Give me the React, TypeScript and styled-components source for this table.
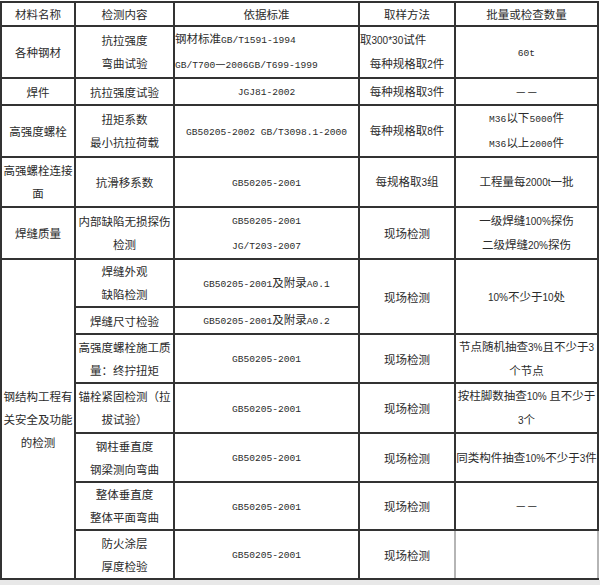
import * as React from 'react'
import styled, { createGlobalStyle } from 'styled-components'

const GlobalStyle = createGlobalStyle`
    html, body {
        margin: 0;
        padding: 0;
        background: #e8e8e8;
    }
`

const Sheet = styled.div`
    background: #fff;
    padding-top: 1px;
    width: 600px;
`

const Table = styled.table`
    border-collapse: collapse;
    table-layout: fixed;
    width: 599px;
    border: 2px solid #333;
    color: #2b2b2b;
    font-family: 'Noto Sans CJK SC', sans-serif;
    font-size: 11.5px;
`

const Latin = styled.span``

const Row = styled.tr<{ $h: number }>`
    height: ${(p) => p.$h}px;
`

const Cell = styled.td<{ $sans?: boolean; $faint?: boolean }>`
    border: 2px solid #333;
    ${(p) => (p.$faint ? 'border-left-color: #9a9a9a; border-right-color: #b5b5b5;' : '')}
    padding: 0;
    text-align: center;
    vertical-align: middle;
    line-height: 22px;
    overflow: visible;

    ${Latin} {
        font-family: ${(p) => (p.$sans ? "'Liberation Sans', sans-serif" : "'Liberation Mono', monospace")};
        font-size: ${(p) => (p.$sans ? '10px' : '9.6px')};
    }
`

const Line = styled.div<{ $align?: 'left' | 'center' }>`
    line-height: 23px;
    white-space: nowrap;
    text-align: ${(p) => p.$align ?? 'center'};
`

const text = (s: string) =>
    s.split(/([\x21-\x7e]+)/).map((part, i) =>
        /^[\x21-\x7e]/.test(part) ? <Latin key={i}>{part}</Latin> : part,
    )

const Lines = ({ items, align }: { items: string[]; align?: 'left' | 'center' }) => (
    <>
        {items.map((s, i) => (
            <Line key={i} $align={align}>
                {text(s)}
            </Line>
        ))}
    </>
)

export default function App() {
    return (
        <>
            <GlobalStyle />
            <Sheet>
                <Table>
                    <colgroup>
                        <col style={{ width: 74 }} />
                        <col style={{ width: 99 }} />
                        <col style={{ width: 185 }} />
                        <col style={{ width: 96 }} />
                        <col style={{ width: 143 }} />
                    </colgroup>
                    <tbody>
                        <Row $h={24}>
                            <Cell>材料名称</Cell>
                            <Cell>检测内容</Cell>
                            <Cell>依据标准</Cell>
                            <Cell>取样方法</Cell>
                            <Cell>批量或检查数量</Cell>
                        </Row>
                        <Row $h={50}>
                            <Cell>各种钢材</Cell>
                            <Cell>
                                <Lines items={['抗拉强度', '弯曲试验']} />
                            </Cell>
                            <Cell>
                                <Lines align="left" items={['钢材标准GB/T1591-1994', 'GB/T700—2006GB/T699-1999']} />
                            </Cell>
                            <Cell $sans>
                                <Line $align="left">{text('取300*30试件')}</Line>
                                <Line>{text('每种规格取2件')}</Line>
                            </Cell>
                            <Cell>{text('60t')}</Cell>
                        </Row>
                        <Row $h={23}>
                            <Cell>焊件</Cell>
                            <Cell>抗拉强度试验</Cell>
                            <Cell>{text('JGJ81-2002')}</Cell>
                            <Cell $sans>{text('每种规格取3件')}</Cell>
                            <Cell>－－</Cell>
                        </Row>
                        <Row $h={49}>
                            <Cell>高强度螺栓</Cell>
                            <Cell>
                                <Lines items={['扭矩系数', '最小抗拉荷载']} />
                            </Cell>
                            <Cell>
                                <Line>
                                    <Latin>GB50205-2002 GB/T3098.1-2000</Latin>
                                </Line>
                            </Cell>
                            <Cell $sans>{text('每种规格取8件')}</Cell>
                            <Cell>
                                <Lines items={['M36以下5000件', 'M36以上2000件']} />
                            </Cell>
                        </Row>
                        <Row $h={50}>
                            <Cell>
                                <Lines items={['高强螺栓连接', '面']} />
                            </Cell>
                            <Cell>抗滑移系数</Cell>
                            <Cell>{text('GB50205-2001')}</Cell>
                            <Cell $sans>{text('每规格取3组')}</Cell>
                            <Cell $sans>{text('工程量每2000t一批')}</Cell>
                        </Row>
                        <Row $h={48}>
                            <Cell>焊缝质量</Cell>
                            <Cell>
                                <Lines items={['内部缺陷无损探伤', '检测']} />
                            </Cell>
                            <Cell>
                                <Lines items={['GB50205-2001', 'JG/T203-2007']} />
                            </Cell>
                            <Cell>现场检测</Cell>
                            <Cell $sans>
                                <Lines items={['一级焊缝100%探伤', '二级焊缝20%探伤']} />
                            </Cell>
                        </Row>
                        <Row $h={48}>
                            <Cell rowSpan={8}>
                                <Lines items={['钢结构工程有', '关安全及功能', '的检测']} />
                            </Cell>
                            <Cell>
                                <Lines items={['焊缝外观', '缺陷检测']} />
                            </Cell>
                            <Cell>{text('GB50205-2001及附录A0.1')}</Cell>
                            <Cell rowSpan={2}>现场检测</Cell>
                            <Cell rowSpan={2} $sans>
                                {text('10%不少于10处')}
                            </Cell>
                        </Row>
                        <Row $h={25}>
                            <Cell>焊缝尺寸检验</Cell>
                            <Cell>{text('GB50205-2001及附录A0.2')}</Cell>
                        </Row>
                        <Row $h={48}>
                            <Cell>
                                <Lines items={['高强度螺栓施工质', '量：终拧扭矩']} />
                            </Cell>
                            <Cell>{text('GB50205-2001')}</Cell>
                            <Cell>现场检测</Cell>
                            <Cell $sans>
                                <Lines items={['节点随机抽查3%且不少于3', '个节点']} />
                            </Cell>
                        </Row>
                        <Row $h={50}>
                            <Cell>
                                <Lines items={['锚栓紧固检测（拉', '拔试验）']} />
                            </Cell>
                            <Cell>{text('GB50205-2001')}</Cell>
                            <Cell>现场检测</Cell>
                            <Cell $sans>
                                <Lines items={['按柱脚数抽查10% 且不少于', '3个']} />
                            </Cell>
                        </Row>
                        <Row $h={49}>
                            <Cell>
                                <Lines items={['钢柱垂直度', '钢梁测向弯曲']} />
                            </Cell>
                            <Cell>{text('GB50205-2001')}</Cell>
                            <Cell>现场检测</Cell>
                            <Cell $sans>
                                <Line>{text('同类构件抽查10%不少于3件')}</Line>
                            </Cell>
                        </Row>
                        <Row $h={48}>
                            <Cell>
                                <Lines items={['整体垂直度', '整体平面弯曲']} />
                            </Cell>
                            <Cell>{text('GB50205-2001')}</Cell>
                            <Cell>现场检测</Cell>
                            <Cell>－－</Cell>
                        </Row>
                        <Row $h={49}>
                            <Cell>
                                <Lines items={['防火涂层', '厚度检验']} />
                            </Cell>
                            <Cell>{text('GB50205-2001')}</Cell>
                            <Cell $faint>现场检测</Cell>
                            <Cell $faint></Cell>
                        </Row>
                    </tbody>
                </Table>
            </Sheet>
        </>
    )
}
